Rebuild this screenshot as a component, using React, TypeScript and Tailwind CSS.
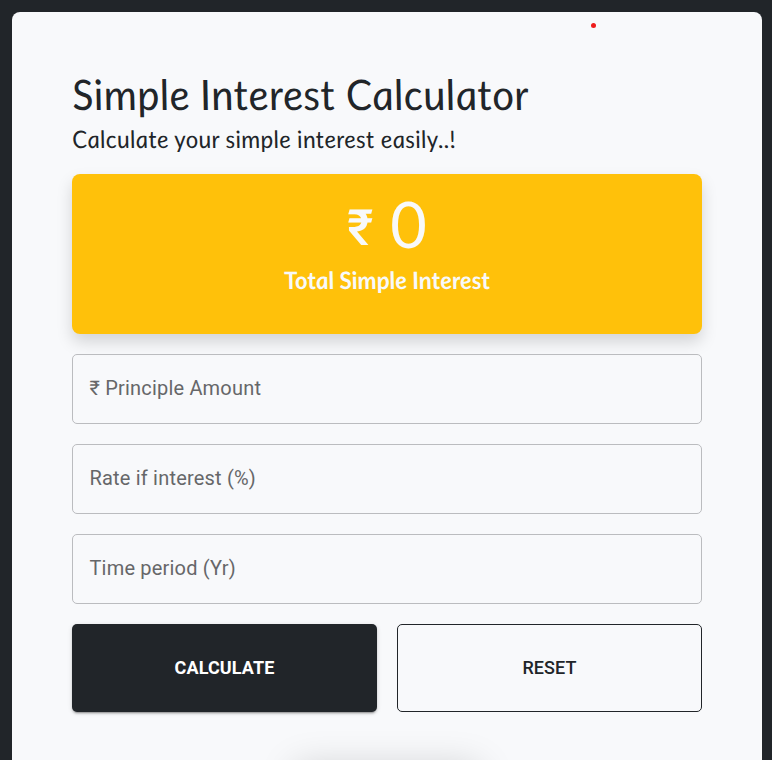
const fields = ['₹ Principle Amount', 'Rate if interest (%)', 'Time period (Yr)'];

export default function App() {
  return (
    <div className="h-[760px] overflow-hidden bg-[#212529] pt-3 pr-[10px] pl-3">
      <main className="relative h-[900px] rounded-lg bg-[#f8f9fb] px-[60px] pt-[60px] font-['Lato',sans-serif] text-[#212529]">
        <span className="absolute top-[11px] left-[579px] size-[5px] rounded-full bg-[#ee1c1c]" />
        <h1 className="h-12 w-fit skew-x-[8deg] whitespace-nowrap text-[42px] leading-[44px] tracking-[0.35px] italic">Simple Interest Calculator</h1>
        <p className="mt-1 h-[29px] w-fit skew-x-[8deg] whitespace-nowrap text-[24px] leading-[30px] tracking-[0.33px] italic">Calculate your simple interest easily..!</p>
        <section className="mt-[21px] flex h-40 flex-col items-center rounded-lg bg-[#ffc10a] text-[#f8f9fa] shadow-[0_8px_16px_rgba(0,0,0,0.15)]">
          <div className="flex h-[92px] items-center gap-[17px] pt-1.5">
            <span className="pt-[10px] font-['Roboto',sans-serif] text-[50px] leading-none font-medium">₹</span>
            <span className="text-[63px] leading-none">0</span>
          </div>
          <h2 className="h-7 skew-x-[8deg] text-[24px] leading-7 font-bold whitespace-nowrap italic">Total Simple Interest</h2>
        </section>
        <form className="mt-5 flex flex-col gap-5 font-['Roboto',sans-serif]">
          {fields.map((label) => (
            <label key={label} className="flex h-[70px] items-center rounded-[5px] border border-[#bbbcbf] pl-[16.5px] text-[20px] tracking-[0.19px] text-[#666769]">
              <span className="-mt-0.5">{label}</span>
            </label>
          ))}
          <div className="grid grid-cols-2 gap-5 text-[18px] font-medium tracking-[0.1px]">
            <button type="button" className="h-[88px] rounded-[5px] bg-[#212529] pb-0.5 font-bold text-white shadow-[0_3px_1px_-2px_rgba(0,0,0,0.2),0_2px_2px_rgba(0,0,0,0.14),0_1px_5px_rgba(0,0,0,0.12)]">CALCULATE</button>
            <button type="button" className="h-[88px] rounded-[5px] border border-[#212529] pb-0.5">RESET</button>
          </div>
        </form>
        <div className="mx-auto mt-[54px] h-[60px] w-[186px] rounded-lg bg-[#f8f9fb] shadow-[0_0_36px_rgba(0,0,0,0.17)]" />
      </main>
    </div>
  );
}
